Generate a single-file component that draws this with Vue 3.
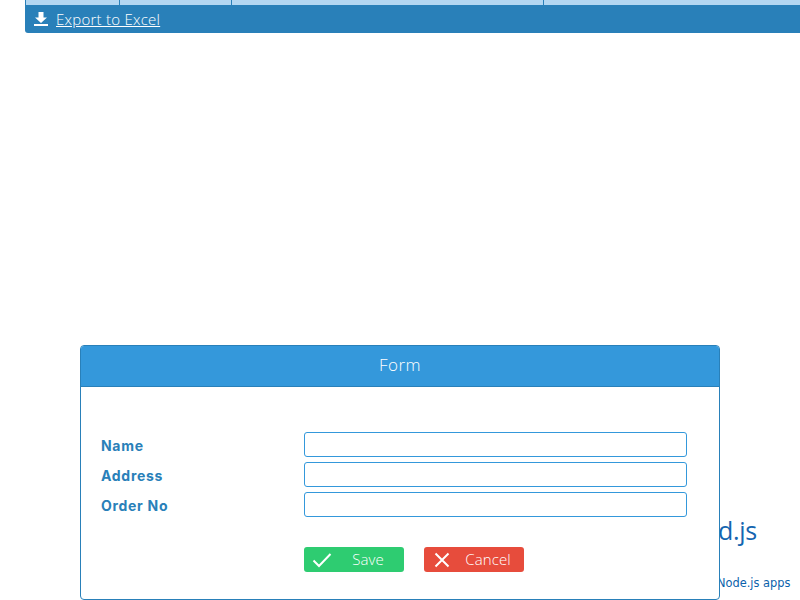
<script setup>
const cols = [94, 112, 312, 257]
const fields = ['Name', 'Address', 'Order No']
</script>

<template>
  <div class="page">
    <div class="grid-foot">
      <div class="cells">
        <div v-for="(w, i) in cols" :key="i" class="cell" :style="{ width: w + 'px' }"></div>
      </div>
      <div class="bar">
        <svg class="dl" viewBox="0 0 14 14" width="14" height="14">
          <path d="M4.5 0h5v5.5H13L7 11 1 5.5h3.5z" fill="#fff" />
          <rect x="0" y="12" width="14" height="2" fill="#fff" />
        </svg>
        <a class="export">Export to Excel</a>
      </div>
    </div>

    <div class="promo">
      <div class="promo-title">d.js</div>
      <div class="promo-sub">Node.js apps</div>
    </div>

    <div class="modal">
      <div class="modal-head">Form</div>
      <div class="modal-body">
        <div v-for="f in fields" :key="f" class="row">
          <label class="lbl">{{ f }}</label>
          <input class="inp" type="text" />
        </div>
        <div class="actions">
          <button class="btn save">
            <svg class="ic" viewBox="0 0 20 16" width="20" height="16">
              <path d="M1.5 8.5 7 14 18.5 2" fill="none" stroke="#fff" stroke-width="2" />
            </svg>
            <span>Save</span>
          </button>
          <button class="btn cancel">
            <svg class="ic" viewBox="0 0 16 16" width="16" height="16">
              <path d="M1.5 1.5l13 13M14.5 1.5l-13 13" fill="none" stroke="#fff" stroke-width="2" />
            </svg>
            <span>Cancel</span>
          </button>
        </div>
      </div>
    </div>
  </div>
</template>

<style>
html, body { margin: 0; background: #fff; overflow: hidden; }
</style>

<style scoped>
.page {
  position: relative;
  width: 800px;
  height: 600px;
  overflow: hidden;
  background: #fff;
  font-family: "Open Sans", sans-serif;
}
.grid-foot { margin-left: 25px; }
.cells { display: flex; height: 5px; background: #b3d7f2; }
.cell { box-sizing: border-box; height: 5px; border-left: 1px solid #2980b9; }
.bar {
  display: flex;
  align-items: center;
  height: 28px;
  padding-left: 9px;
  gap: 8px;
  background: #2980b9;
  border-bottom-left-radius: 3px;
}
.dl { display: block; }
.export {
  color: #fff;
  font-size: 15px;
  font-weight: 300;
  letter-spacing: 0.25px;
  text-decoration: underline;
  white-space: nowrap;
}
.promo { display: flex; flex-direction: column; align-items: flex-start; padding: 478px 0 0 717px; }
.promo-title {
  margin-left: 1px;
  color: #1565b0;
  font-weight: 400;
  font-size: 25px;
  letter-spacing: -0.3px;
  line-height: 38px;
}
.promo-sub {
  margin-top: 27px;
  color: #0b62ab;
  font-family: "DejaVu Sans", sans-serif;
  font-size: 11.4px;
  line-height: 14px;
  white-space: nowrap;
}
.modal {
  position: absolute;
  left: 80px;
  top: 345px;
  box-sizing: border-box;
  width: 640px;
  height: 255px;
  background: #fff;
  border: 1px solid #2980b9;
  border-radius: 4px;
  overflow: hidden;
}
.modal-head {
  box-sizing: border-box;
  height: 41px;
  line-height: 37px;
  text-align: center;
  color: #fff;
  background: #3498db;
  border-bottom: 1px solid #2980b9;
  font-size: 17px;
  font-weight: 300;
  letter-spacing: 0.5px;
}
.modal-body { padding: 45px 32px 0 20px; }
.row { display: flex; align-items: center; height: 25px; margin-bottom: 5px; }
.lbl {
  width: 203px;
  padding-top: 2px;
  color: #2980b9;
  font-family: "Inter", sans-serif;
  font-size: 14px;
  font-weight: 700;
  letter-spacing: 0.7px;
  white-space: nowrap;
}
.inp {
  box-sizing: border-box;
  width: 383px;
  height: 25px;
  margin: 0;
  padding: 0 6px;
  border: 1px solid #3498db;
  border-radius: 3px;
  background: #fff;
  outline: none;
}
.actions { display: flex; gap: 20px; margin-top: 30px; margin-left: 203px; }
.btn {
  position: relative;
  box-sizing: border-box;
  width: 100px;
  height: 25px;
  border: 0;
  border-radius: 3px;
  padding: 0 0 2px 28px;
  color: #fff;
  font-family: "Open Sans", sans-serif;
  font-size: 15px;
  font-weight: 300;
  letter-spacing: 0.1px;
  text-align: center;
}
.save { background: #2ecc71; }
.cancel { background: #e74c3c; }
.ic { position: absolute; left: 8px; top: 5px; }
.cancel .ic { left: 10px; }
</style>
